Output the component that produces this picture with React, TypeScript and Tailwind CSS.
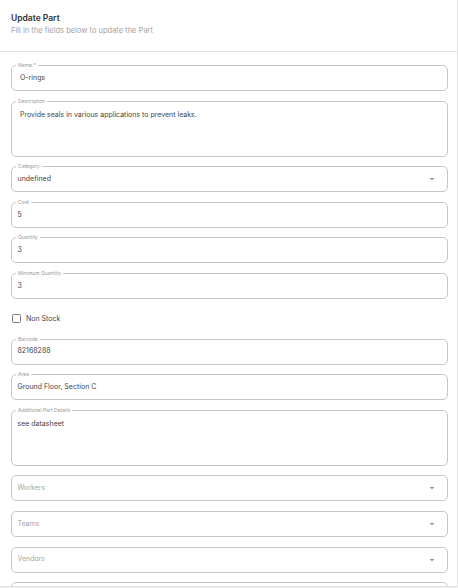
import React from 'react';

type FieldProps = {
  label?: string;
  value?: string;
  placeholder?: string;
  select?: boolean;
  multiline?: boolean;
  inset?: boolean;
};

const Arrow = () => (
  <svg width="6" height="4" viewBox="0 0 6 4" className="absolute right-[12px] top-1/2 -translate-y-1/2">
    <path d="M0.5 1 L5.5 1 L3 3.2 Z" fill="#8e8e9c" />
  </svg>
);

const Field: React.FC<FieldProps> = ({ label, value, placeholder, select, multiline, inset }) => {
  return (
    <div
      className={`relative rounded-[5px] border border-[#c6c6c6] ${multiline ? 'h-[56px]' : 'h-[26px]'} ${
        inset ? 'pl-[8px]' : 'pl-[5.5px]'
      }`}
    >
      {label && (
        <span className="absolute left-[4px] top-[-4px] bg-white px-[2px] text-[5px] leading-[7px] text-[#9a9a9a]">
          {label}
        </span>
      )}
      <div
        className={`text-[7px] ${multiline ? 'pt-[8px] leading-[9px]' : 'flex h-full items-center'} ${
          value ? 'text-[#444]' : 'text-[#a5a5a5]'
        }`}
      >
        {value ?? placeholder}
      </div>
      {select && <Arrow />}
    </div>
  );
};

export default function App() {
  return (
    <div
      className="min-h-[588px] w-[458px] border-r border-[#e4e4e4] bg-white"
      style={{ fontFamily: 'Inter, "Noto Sans", sans-serif' }}
    >
      <div className="px-[11px] pt-[13px] pb-[15px]">
        <div className="text-[8.5px] font-semibold leading-[11px] text-[#333]">Update Part</div>
        <div className="mt-[2px] text-[7.5px] leading-[10px] text-[#a3a3a3]">
          Fill in the fields below to update the Part
        </div>
      </div>
      <div className="h-px bg-[#e2e2e2]" />
      <div className="flex flex-col gap-[9.6px] pl-[11px] pr-[9px] pt-[13px]">
        <Field label="Name *" value="O-rings" inset />
        <Field label="Description" value="Provide seals in various applications to prevent leaks." multiline inset />
        <Field label="Category" value="undefined" select />
        <Field label="Cost" value="5" />
        <Field label="Quantity" value="3" />
        <Field label="Minimum Quantity" value="3" />
        <div className="flex h-[20.4px] items-center gap-[5px] pl-[1px]">
          <div className="h-[9px] w-[9px] rounded-[1.5px] border-[1.5px] border-[#7a7a7a]" />
          <span className="text-[7px] text-[#454545]">Non Stock</span>
        </div>
        <Field label="Barcode" value="82168288" />
        <Field label="Area" value="Ground Floor, Section C" />
        <Field label="Additional Part Details" value="see datasheet" multiline />
        <Field placeholder="Workers" select />
        <Field placeholder="Teams" select />
        <Field placeholder="Vendors" select />
        <Field select />
      </div>
      <div className="fixed inset-x-0 top-[586px] h-[100px] border-t border-[#dedede] bg-[#f3f3f3]" />
    </div>
  );
}
